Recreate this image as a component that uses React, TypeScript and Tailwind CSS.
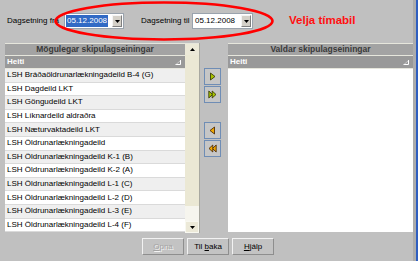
import React from "react";

const rows = [
  "LSH Bráðaöldrunarlækningadeild B-4 (G)",
  "LSH Dagdeild LKT",
  "LSH Göngudeild LKT",
  "LSH Líknardeild aldraðra",
  "LSH Næturvaktadeild LKT",
  "LSH Öldrunarlækningadeild",
  "LSH Öldrunarlækningadeild K-1 (B)",
  "LSH Öldrunarlækningadeild K-2 (A)",
  "LSH Öldrunarlækningadeild L-1 (C)",
  "LSH Öldrunarlækningadeild L-2 (D)",
  "LSH Öldrunarlækningadeild L-3 (E)",
  "LSH Öldrunarlækningadeild L-4 (F)",
];

function DateBox({ w, selected }: { w: string; selected?: boolean }) {
  return (
    <div className={`${w} h-[16px] bg-white border border-[#9aa3ad] flex items-center pl-[1px] pr-[1px]`}>
      <span
        className={`leading-[12px] h-[12px] px-[1px] ${selected ? "bg-[#316ac5] text-white" : "text-black"}`}
      >
        05.12.2008
      </span>
      <div className="ml-auto w-[10px] h-[12px] bg-[#d4d0c8] border-t border-l border-[#f4f4f4] border-b border-r border-b-[#808080] border-r-[#808080] flex items-center justify-center">
        <svg width="5" height="3" viewBox="0 0 5 3">
          <path d="M0 0H5L2.5 3Z" fill="#000" />
        </svg>
      </div>
    </div>
  );
}

function Header({ title }: { title: string }) {
  return (
    <>
      <div className="h-[12px] bg-[#a3a3a3] border-t border-[#e6e6dc] flex items-center justify-center text-[#3a3a3a] font-bold text-[8.5px] leading-none">
        {title}
      </div>
      <div className="h-[14px] bg-[#999999] border-t border-[#e6e6dc] border-b border-b-[#e6e6dc] flex items-center pl-[2px] pr-[4px] text-white font-bold leading-none">
        <span>Heiti</span>
        <svg className="ml-auto" width="6" height="5" viewBox="0 0 6 5">
          <path d="M5.5 0V4.5H0.5" stroke="#fff" strokeWidth="1" fill="none" />
          <path d="M1 4.5L5.5 0.5" stroke="#e8e8e8" strokeWidth="0.6" fill="none" />
        </svg>
      </div>
    </>
  );
}

function ArrowBtn({ kind, className }: { kind: "r" | "rr" | "l" | "ll"; className?: string }) {
  const green = "#a8c400";
  const orange = "#f0a800";
  return (
    <div
      className={`w-[17px] h-[17px] border border-[#6f8db5] bg-[#c6c6c6] flex items-center justify-center ${className ?? ""}`}
    >
      <svg width="9" height="9" viewBox="0 0 9 9">
        {kind === "r" && <path d="M2.5 1L7 4.5L2.5 8Z" fill={green} stroke="#303000" strokeWidth="0.8" />}
        {kind === "rr" && (
          <>
            <path d="M0.8 1L4.6 4.5L0.8 8Z" fill={green} stroke="#303000" strokeWidth="0.8" />
            <path d="M4.2 1L8 4.5L4.2 8Z" fill={green} stroke="#303000" strokeWidth="0.8" />
          </>
        )}
        {kind === "l" && <path d="M6.5 1L2 4.5L6.5 8Z" fill={orange} stroke="#402000" strokeWidth="0.8" />}
        {kind === "ll" && (
          <>
            <path d="M8.2 1L4.4 4.5L8.2 8Z" fill={orange} stroke="#402000" strokeWidth="0.8" />
            <path d="M4.8 1L1 4.5L4.8 8Z" fill={orange} stroke="#402000" strokeWidth="0.8" />
          </>
        )}
      </svg>
    </div>
  );
}

function Btn({ children, disabled }: { children: React.ReactNode; disabled?: boolean }) {
  return (
    <div
      className={`w-[42px] h-[17px] flex items-center justify-center border border-t-[#f2f2f2] border-l-[#f2f2f2] border-b-[#8e8e8e] border-r-[#8e8e8e] bg-[#c3c3c3] ${
        disabled ? "text-[#a4a4a4] [text-shadow:1px_1px_0_#f4f4f4]" : "text-black"
      }`}
    >
      {children}
    </div>
  );
}

export default function App() {
  return (
    <div
      className="w-[418px] h-[261px] bg-[#c0c0c0] relative overflow-hidden flex text-[8px] text-black"
      style={{ fontFamily: '"Liberation Sans", Arial, sans-serif' }}
    >
      <div className="w-[413px] flex flex-col">
        {/* Top row */}
        <div className="h-[43px] flex items-center pl-[7px] pb-[1px]">
          <span className="w-[57px] whitespace-nowrap">Dagsetning frá</span>
          <DateBox w="w-[60px]" selected />
          <span className="ml-[17px] w-[51px] whitespace-nowrap">Dagsetning til</span>
          <DateBox w="w-[61px]" />
          <span className="ml-[36px] text-[11.5px] font-bold text-[#ff1010] leading-none whitespace-nowrap">
            Velja tímabil
          </span>
        </div>

        {/* Panels */}
        <div className="flex h-[190px] pl-[5px]">
          {/* Left panel */}
          <div className="w-[195px] flex">
            <div className="w-[180px] flex flex-col">
              <Header title="Mögulegar skipulagseiningar" />
              <div className="flex flex-col">
                {rows.map((r, i) => (
                  <div
                    key={r}
                    className={`h-[13.6px] flex items-center pl-[2px] whitespace-nowrap border-b border-[#dadada] ${
                      i % 2 === 0 ? "bg-[#efefef]" : "bg-white"
                    }`}
                  >
                    {r}
                  </div>
                ))}
              </div>
            </div>
            {/* Scrollbar */}
            <div className="w-[15px] flex flex-col border-r border-[#a8a8a0] bg-[#f6f5ee]">
              <div className="h-[12px] bg-[#ece9d8] border-t border-[#e6e6dc] flex items-center justify-center">
                <svg width="5" height="3" viewBox="0 0 5 3">
                  <path d="M0 3H5L2.5 0Z" fill="#000" />
                </svg>
              </div>
              <div className="h-[151px] bg-[#ebe8d4]" />
              <div className="flex-1" />
              <div className="h-[12px] bg-[#ece9d8] border border-[#f8f8f0] flex items-center justify-center">
                <svg width="5" height="3" viewBox="0 0 5 3">
                  <path d="M0 0H5L2.5 3Z" fill="#000" />
                </svg>
              </div>
            </div>
          </div>

          {/* Middle buttons */}
          <div className="w-[28px] flex flex-col pl-[4px] pt-[25px]">
            <ArrowBtn kind="r" />
            <ArrowBtn kind="rr" className="mt-[1px]" />
            <ArrowBtn kind="l" className="mt-[19px]" />
            <ArrowBtn kind="ll" className="mt-[1px]" />
          </div>

          {/* Right panel */}
          <div className="w-[185px] flex flex-col">
            <Header title="Valdar skipulagseiningar" />
            <div className="flex-1 bg-white mb-[1px]" />
          </div>
        </div>

        {/* Bottom buttons */}
        <div className="flex gap-[3px] pl-[142px] pt-[5px]">
          <Btn disabled>
            <span>
              <u>O</u>pna
            </span>
          </Btn>
          <Btn>
            <span>
              Til <u>b</u>aka
            </span>
          </Btn>
          <Btn>
            <span>
              <u>H</u>jálp
            </span>
          </Btn>
        </div>
      </div>
      <div className="w-[3px] bg-[#acacac]" />
      <div className="w-[2px] bg-[#2f5fc0]" />

      <svg className="absolute left-0 top-0 pointer-events-none" width="418" height="261">
        <ellipse cx="164" cy="21" rx="108.5" ry="18.5" fill="none" stroke="#ff0000" strokeWidth="2.6" />
      </svg>
    </div>
  );
}
